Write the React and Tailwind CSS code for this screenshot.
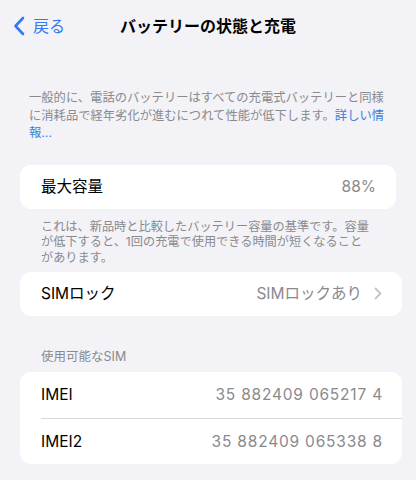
import React from 'react';

const font = { fontFamily: 'Inter, "Noto Sans CJK JP", sans-serif' };

const Row = ({ label, value, chevron }) => (
  <div className="flex items-center justify-between h-[44px] pl-[21px] pr-[20px]">
    <span className="text-[15.5px] text-black">{label}</span>
    <span className="flex items-center gap-[12px] text-[15.5px] text-[#8a8a8e]">
      {value}
      {chevron && (
        <svg width="8" height="13" viewBox="0 0 8 13" fill="none">
          <path d="M1.5 1.5 L6.5 6.5 L1.5 11.5" stroke="#c4c4c7" strokeWidth="1.8" strokeLinecap="round" strokeLinejoin="round" />
        </svg>
      )}
    </span>
  </div>
);

const App = () => {
  return (
    <div className="w-[416px] h-[480px] bg-[#f2f2f7] overflow-hidden" style={font}>
      {/* Nav bar */}
      <div className="relative flex items-center h-[52px]">
        <div className="flex items-center gap-[8px] pl-[13px] text-[#3478f6]">
          <svg width="12" height="20" viewBox="0 0 12 20" fill="none">
            <path d="M10 2 L2.5 10 L10 18" stroke="#3478f6" strokeWidth="2.6" strokeLinecap="round" strokeLinejoin="round" />
          </svg>
          <span className="text-[16px]">戻る</span>
        </div>
        <div className="absolute left-0 right-0 text-center text-[16px] font-bold text-black pointer-events-none">
          バッテリーの状態と充電
        </div>
      </div>

      {/* Description */}
      <p className="mt-[37px] pl-[29px] pr-[20px] text-[12.3px] leading-[17.5px] text-[#8a8a8e] whitespace-nowrap">
        一般的に、電話のバッテリーはすべての充電式バッテリーと同様
        <br />
        に消耗品で経年劣化が進むにつれて性能が低下します。<span className="text-[#3a7fd8]">詳しい情</span>
        <br />
        <span className="text-[#3a7fd8]">報...</span>
      </p>

      {/* Max capacity */}
      <div className="mt-[23px] ml-5 mr-5 bg-white rounded-[11px]">
        <Row label="最大容量" value="88%" />
      </div>
      <p className="mt-[10px] pl-[41px] pr-[20px] text-[12.2px] leading-[15.8px] text-[#8a8a8e] whitespace-nowrap">
        これは、新品時と比較したバッテリー容量の基準です。容量
        <br />
        が低下すると、1回の充電で使用できる時間が短くなること
        <br />
        があります。
      </p>

      {/* SIM lock */}
      <div className="mt-[6px] ml-5 mr-[14px] bg-white rounded-[11px]">
        <Row label="SIMロック" value="SIMロックあり" chevron />
      </div>

      {/* Available SIM */}
      <div className="mt-[33px] pl-[41px] text-[12.5px] leading-[16px] text-[#8a8a8e]">使用可能なSIM</div>
      <div className="mt-[7px] ml-5 mr-[14px] bg-white rounded-[11px] overflow-hidden">
        <div className="flex items-center justify-between h-[46px] pl-[21px] pr-[19px]">
          <span className="text-[15.5px] text-black">IMEI</span>
          <span className="text-[15.5px] tracking-[0.8px] text-[#8a8a8e]">35 882409 065217 4</span>
        </div>
        <div className="ml-[21px] h-px bg-[#d8d8dc]" />
        <div className="flex items-center justify-between h-[45px] pl-[21px] pr-[19px]">
          <span className="text-[15.5px] text-black">IMEI2</span>
          <span className="text-[15.5px] tracking-[0.8px] text-[#8a8a8e]">35 882409 065338 8</span>
        </div>
      </div>
    </div>
  );
};

export default App;
